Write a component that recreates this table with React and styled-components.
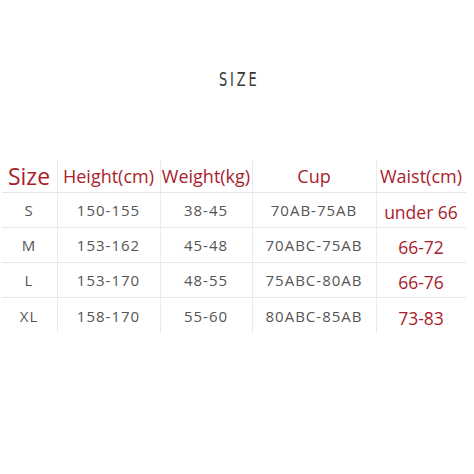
import React from "react";
import styled, { createGlobalStyle } from "styled-components";

const GlobalStyle = createGlobalStyle`
  body {
    margin: 0;
    background: #ffffff;
    font-family: "Open Sans", "Noto Sans", sans-serif;
  }
`;

const Page = styled.div`
  width: 474px;
  height: 474px;
  padding-top: 66px;
  box-sizing: border-box;
  display: flex;
  flex-direction: column;
  align-items: center;
`;

const Title = styled.h1`
  margin: 0 0 68px 4px;
  font-family: "DejaVu Sans Condensed", "DejaVu Sans", sans-serif;
  font-weight: 200;
  font-size: 20px;
  line-height: 26px;
  letter-spacing: 4px;
  color: #3a3a3a;
  transform: scaleX(0.72);
`;

const Table = styled.div`
  display: grid;
  grid-template-columns: 55px 103px 92px 124px 90px;
  grid-auto-rows: 35px;
  grid-template-rows: 33px;
  margin-left: -7px;
`;

const Cell = styled.div`
  display: flex;
  align-items: center;
  justify-content: center;
  border-left: ${(p) => (p.$first ? "none" : "1px solid #ebebeb")};
  border-bottom: ${(p) => (p.$last ? "none" : "1px solid #e6e6e6")};
  color: ${(p) => (p.$red ? "#a91d2c" : "#555555")};
  font-size: ${(p) => p.$size || 15}px;
  letter-spacing: ${(p) => p.$spacing ?? 1}px;
  padding-top: ${(p) => p.$shift || 0}px;
  white-space: nowrap;
`;

const headers = [
  { label: "Size", size: 23 },
  { label: "Height(cm)", size: 18 },
  { label: "Weight(kg)", size: 18 },
  { label: "Cup", size: 18 },
  { label: "Waist(cm)", size: 18 },
];

const rows = [
  ["S", "150-155", "38-45", "70AB-75AB", "under 66"],
  ["M", "153-162", "45-48", "70ABC-75AB", "66-72"],
  ["L", "153-170", "48-55", "75ABC-80AB", "66-76"],
  ["XL", "158-170", "55-60", "80ABC-85AB", "73-83"],
];

const App = () => (
  <>
    <GlobalStyle />
    <Page>
      <Title>SIZE</Title>
      <Table>
        {headers.map((h, i) => (
          <Cell key={h.label} $first={i === 0} $red $size={h.size} $spacing={0}>
            {h.label}
          </Cell>
        ))}
        {rows.map((row, r) =>
          row.map((value, c) => (
            <Cell
              key={`${r}-${c}`}
              $first={c === 0}
              $last={r === rows.length - 1}
              $red={c === 4}
              $size={c === 4 ? 17.5 : 15}
              $spacing={c === 4 ? 0 : 1}
              $shift={c === 4 ? 4 : 0}
            >
              {value}
            </Cell>
          ))
        )}
      </Table>
    </Page>
  </>
);

export default App;
